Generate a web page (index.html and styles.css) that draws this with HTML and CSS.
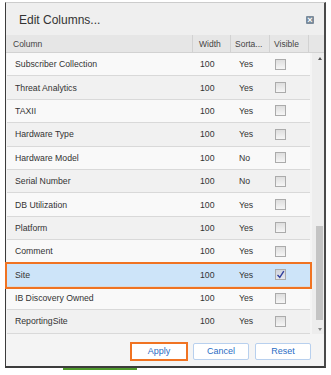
FILE: index.html
```html
<!DOCTYPE html>
<html>
<head>
    <title>Edit Columns</title>
    <link rel="stylesheet" href="styles.css">
</head>
<body>
    <section class="dialog">
        <div class="title-bar">
            <span class="title">Edit Columns...</span>
            <span class="close">&times;</span>
        </div>
        <div class="grid-head">
            <div class="cell col-name">Column</div>
            <div class="cell col-width">Width</div>
            <div class="cell col-sort">Sorta...</div>
            <div class="cell col-vis">Visible</div>
            <div class="cell col-pad"></div>
        </div>
        <div class="grid-body">
            <div class="rows">
                <div class="row"><div class="cell col-name">Subscriber Collection</div><div class="cell col-width">100</div><div class="cell col-sort">Yes</div><div class="cell col-vis"><span class="check"></span></div></div>
                <div class="row alt"><div class="cell col-name">Threat Analytics</div><div class="cell col-width">100</div><div class="cell col-sort">Yes</div><div class="cell col-vis"><span class="check"></span></div></div>
                <div class="row"><div class="cell col-name">TAXII</div><div class="cell col-width">100</div><div class="cell col-sort">Yes</div><div class="cell col-vis"><span class="check"></span></div></div>
                <div class="row alt"><div class="cell col-name">Hardware Type</div><div class="cell col-width">100</div><div class="cell col-sort">Yes</div><div class="cell col-vis"><span class="check"></span></div></div>
                <div class="row"><div class="cell col-name">Hardware Model</div><div class="cell col-width">100</div><div class="cell col-sort">No</div><div class="cell col-vis"><span class="check"></span></div></div>
                <div class="row alt"><div class="cell col-name">Serial Number</div><div class="cell col-width">100</div><div class="cell col-sort">No</div><div class="cell col-vis"><span class="check"></span></div></div>
                <div class="row"><div class="cell col-name">DB Utilization</div><div class="cell col-width">100</div><div class="cell col-sort">Yes</div><div class="cell col-vis"><span class="check"></span></div></div>
                <div class="row alt"><div class="cell col-name">Platform</div><div class="cell col-width">100</div><div class="cell col-sort">Yes</div><div class="cell col-vis"><span class="check"></span></div></div>
                <div class="row"><div class="cell col-name">Comment</div><div class="cell col-width">100</div><div class="cell col-sort">Yes</div><div class="cell col-vis"><span class="check"></span></div></div>
                <div class="row selected"><div class="cell col-name">Site</div><div class="cell col-width">100</div><div class="cell col-sort">Yes</div><div class="cell col-vis"><span class="check checked"><svg width="9" height="9" viewBox="0 0 9 9"><path d="M1.5 5 L3.8 7.3 L7.8 1.2" fill="none" stroke="#2f3f9e" stroke-width="1.4"/></svg></span></div></div>
                <div class="row"><div class="cell col-name">IB Discovery Owned</div><div class="cell col-width">100</div><div class="cell col-sort">Yes</div><div class="cell col-vis"><span class="check"></span></div></div>
                <div class="row alt"><div class="cell col-name">ReportingSite</div><div class="cell col-width">100</div><div class="cell col-sort">Yes</div><div class="cell col-vis"><span class="check"></span></div></div>
            </div>
            <div class="scrollbar">
                <span class="arrow up"></span>
                <div class="track"><span class="thumb"></span></div>
                <span class="arrow down"></span>
            </div>
        </div>
        <div class="footer">
            <button class="btn btn-apply">Apply</button>
            <button class="btn">Cancel</button>
            <button class="btn">Reset</button>
        </div>
    </section>
    <div class="page-strip"></div>
</body>
</html>
```

FILE: styles.css
```css
:root {
    --color-text: #333333;
    --color-line: #d9d9d9;
    --color-orange: #f07322;
    --color-blue: #2a6cc4;
}

html,
body {
    margin: 0;
    padding: 0;
    background: #ffffff;
}

body {
    font-family: "Liberation Sans", Arial, sans-serif;
    color: var(--color-text);
    padding-top: 2px;
}

.dialog {
    margin-left: 5px;
    width: 318px;
    height: 363px;
    border-left: 1px solid #3c3c3c;
    border-right: 2px solid #4a4a4a;
    border-bottom: 2px solid #3c3c3c;
    border-top: 1px solid #cccccc;
    background: #f4f4f4;
    display: flex;
    flex-direction: column;
}

.title-bar {
    height: 32px;
    flex-shrink: 0;
    display: flex;
    align-items: center;
    justify-content: space-between;
    padding: 1px 10px 0 13px;
    box-sizing: border-box;
    background: #efefef;
}

.title {
    font-size: 12px;
    color: #333333;
}

.close {
    width: 8px;
    height: 8px;
    background: #7b8b9b;
    color: #ffffff;
    font-size: 9px;
    font-weight: bold;
    line-height: 8px;
    text-align: center;
    border-radius: 1px;
}

.grid-head {
    display: flex;
    flex-shrink: 0;
    height: 17px;
    background: #e6e6e6;
    border-bottom: 1px solid #d2d2d2;
    font-size: 8.5px;
    color: #444444;
}

.grid-head .cell {
    border-right: 1px solid #d2d2d2;
}

.grid-head .col-pad {
    border-right: none;
}

.cell {
    display: flex;
    align-items: center;
    box-sizing: border-box;
    overflow: hidden;
    white-space: nowrap;
}

.grid-head .col-name {
    width: 187px;
    padding-left: 7px;
}

.grid-head .col-width {
    width: 38px;
    padding-left: 6px;
}

.grid-head .col-sort {
    width: 39px;
    padding-left: 4px;
}

.grid-head .col-vis {
    width: 39px;
    padding-left: 4px;
}

.col-pad {
    flex: 1;
}

.grid-body {
    display: flex;
    height: 281px;
    flex-shrink: 0;
}

.rows {
    width: 303px;
    margin-left: 1px;
    font-size: 8.7px;
}

.row {
    display: flex;
    height: 23.4px;
    box-sizing: border-box;
    background: #f9f9f9;
    border-bottom: 1px solid var(--color-line);
}

.row.alt {
    background: #f1f1f1;
}

.row .col-name {
    width: 186px;
    padding-left: 8px;
}

.row .col-width {
    width: 38px;
    padding-left: 7px;
}

.row .col-sort {
    width: 39px;
    padding-left: 8px;
}

.row .col-vis {
    width: 39px;
    padding-left: 5px;
}

.row.selected {
    background: #cde4f9;
    outline: 2px solid var(--color-orange);
    outline-offset: 0;
}

.check {
    width: 9px;
    height: 9px;
    border: 1px solid #ababab;
    background: linear-gradient(#dedede, #f6f6f6);
    display: flex;
}

.check.checked {
    background: linear-gradient(#cfd3dc, #e6e8ee);
}

.scrollbar {
    width: 12px;
    margin-left: 2px;
    display: flex;
    flex-direction: column;
    background: #ededed;
}

.arrow {
    height: 10px;
    display: flex;
    justify-content: center;
    align-items: center;
    padding-left: 4px;
}

.arrow::after {
    content: "";
    border-left: 2px solid transparent;
    border-right: 2px solid transparent;
}

.arrow.up::after {
    border-bottom: 3px solid #555555;
}

.arrow.down::after {
    border-top: 3px solid #8a8a8a;
}

.track {
    flex: 1;
    display: flex;
    flex-direction: column;
    justify-content: flex-end;
    padding-bottom: 4px;
}

.thumb {
    display: block;
    height: 94px;
    margin-left: 4px;
    width: 7px;
    background: #c4c4c4;
}

.footer {
    flex: 1;
    display: flex;
    justify-content: flex-end;
    align-items: center;
    gap: 6px;
    padding: 2px 13px 0 0;
    background: #f4f4f4;
}

.btn {
    width: 56px;
    height: 17px;
    padding: 0;
    background: #ffffff;
    border: 1px solid #b8d0ee;
    border-radius: 2px;
    color: var(--color-blue);
    font-family: "Liberation Sans", Arial, sans-serif;
    font-size: 9px;
    cursor: pointer;
}

.btn-apply {
    border-color: var(--color-orange);
    outline: 1px solid var(--color-orange);
    outline-offset: 0;
    border-radius: 0;
}

.page-strip {
    margin-left: 63px;
    width: 74px;
    height: 2px;
    background: #4f9a2c;
}
```
